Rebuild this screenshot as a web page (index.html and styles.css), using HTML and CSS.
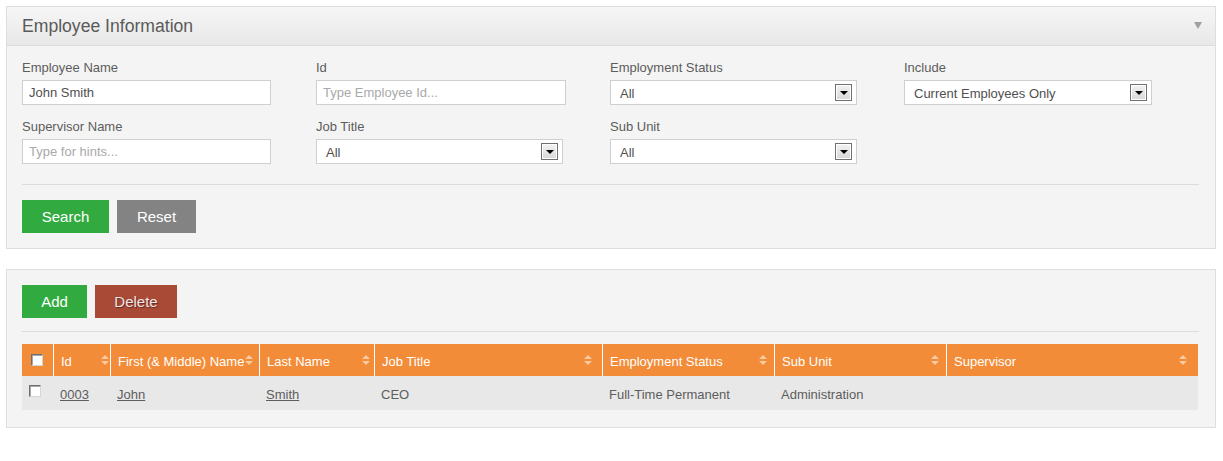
FILE: index.html
```html
<!DOCTYPE html>
<html>
<head>
<meta charset="utf-8">
<link rel="stylesheet" href="styles.css">
</head>
<body>
<div class="panel search-panel">
  <div class="panel-head">
    <h1 class="panel-title">Employee Information</h1>
    <span class="collapse-arrow"></span>
  </div>
  <div class="panel-body">
    <div class="form-grid">
      <div class="field">
        <label class="field-label">Employee Name</label>
        <div class="text-input w249">John Smith</div>
      </div>
      <div class="field">
        <label class="field-label">Id</label>
        <div class="text-input w250 placeholder">Type Employee Id...</div>
      </div>
      <div class="field">
        <label class="field-label">Employment Status</label>
        <div class="select w247"><span class="select-text">All</span><span class="select-btn"></span></div>
      </div>
      <div class="field">
        <label class="field-label">Include</label>
        <div class="select w248"><span class="select-text">Current Employees Only</span><span class="select-btn"></span></div>
      </div>
      <div class="field">
        <label class="field-label">Supervisor Name</label>
        <div class="text-input w249 placeholder">Type for hints...</div>
      </div>
      <div class="field">
        <label class="field-label">Job Title</label>
        <div class="select w247"><span class="select-text">All</span><span class="select-btn"></span></div>
      </div>
      <div class="field">
        <label class="field-label">Sub Unit</label>
        <div class="select w247"><span class="select-text">All</span><span class="select-btn"></span></div>
      </div>
    </div>
    <div class="divider"></div>
    <div class="btn-row">
      <button class="btn btn-green w87">Search</button>
      <button class="btn btn-gray w79">Reset</button>
    </div>
  </div>
</div>

<div class="panel list-panel">
  <div class="btn-row">
    <button class="btn btn-green w65">Add</button>
    <button class="btn btn-red w82">Delete</button>
  </div>
  <div class="divider list-divider"></div>
  <table class="emp-table">
    <colgroup>
      <col style="width:31px">
      <col style="width:57px">
      <col style="width:149px">
      <col style="width:115px">
      <col style="width:228px">
      <col style="width:172px">
      <col style="width:172px">
      <col style="width:252px">
    </colgroup>
    <thead>
      <tr>
        <th class="chk-cell"><span class="chk chk-head"></span></th>
        <th class="sortable">Id</th>
        <th class="sortable">First (&amp; Middle) Name</th>
        <th class="sortable">Last Name</th>
        <th class="sortable">Job Title</th>
        <th class="sortable">Employment Status</th>
        <th class="sortable">Sub Unit</th>
        <th class="sortable">Supervisor</th>
      </tr>
    </thead>
    <tbody>
      <tr>
        <td class="chk-cell"><span class="chk"></span></td>
        <td><a class="cell-link">0003</a></td>
        <td><a class="cell-link">John</a></td>
        <td><a class="cell-link">Smith</a></td>
        <td>CEO</td>
        <td>Full-Time Permanent</td>
        <td>Administration</td>
        <td></td>
      </tr>
    </tbody>
  </table>
</div>
</body>
</html>
```

FILE: styles.css
```css
* { box-sizing: border-box; }

html, body {
  margin: 0;
  padding: 0;
  background: #fff;
}

body {
  padding: 6px 0 0 6px;
  font-family: "Liberation Sans", Arial, sans-serif;
  font-size: 13px;
  color: #5d5d5d;
}

.panel {
  width: 1210px;
  background: #f4f4f4;
  border: 1px solid #dedede;
}

.panel-head {
  position: relative;
  height: 39px;
  padding: 0 15px;
  background: linear-gradient(#f6f6f6, #e8e8e8);
  border-bottom: 1px solid #dcdcdc;
}

.panel-title {
  margin: 0;
  font-size: 17.6px;
  font-weight: normal;
  line-height: 39px;
  color: #5a5a5a;
}

.collapse-arrow {
  position: absolute;
  right: 13px;
  top: 15px;
  width: 0;
  height: 0;
  border-left: 4px solid transparent;
  border-right: 4px solid transparent;
  border-top: 7px solid #a0a0a0;
}

.panel-body {
  padding: 13px 16px 15px 15px;
}

.form-grid {
  display: grid;
  grid-template-columns: repeat(4, 294px);
  row-gap: 13px;
}

.field {
  display: flex;
  flex-direction: column;
  align-items: flex-start;
}

.field-label {
  line-height: 16px;
  padding-top: 1px;
  margin-bottom: 4px;
  color: #5d5d5d;
}

.text-input {
  height: 25px;
  line-height: 23px;
  padding: 0 6px;
  background: #fff;
  border: 1px solid #cfcfcf;
  color: #4f4f4f;
  white-space: nowrap;
  overflow: hidden;
}

.text-input.placeholder { color: #a9a9a9; }

.w247 { width: 247px; }
.w248 { width: 248px; }
.w249 { width: 249px; }
.w250 { width: 250px; }

.select {
  display: flex;
  align-items: center;
  justify-content: space-between;
  height: 25px;
  padding: 0 4px 0 9px;
  background: #fff;
  border: 1px solid #cfcfcf;
  color: #4f4f4f;
}

.select-text { line-height: 23px; padding-top: 1px; }

.select-btn {
  position: relative;
  width: 17px;
  height: 17px;
  border: 1px solid #707070;
  box-shadow: inset 0 0 0 1px #fff;
  background: linear-gradient(#f2f2f2, #d8d8d8);
}

.select-btn::after {
  content: "";
  position: absolute;
  left: 4px;
  top: 6px;
  width: 0;
  height: 0;
  border-left: 4px solid transparent;
  border-right: 4px solid transparent;
  border-top: 4px solid #000;
}

.divider {
  height: 1px;
  background: #dcdcdc;
  margin: 20px 0 15px;
}

.btn-row {
  display: flex;
  gap: 8px;
}

.btn {
  height: 33px;
  padding: 0;
  border: none;
  font-family: "Liberation Sans", Arial, sans-serif;
  font-size: 15px;
  color: #fff;
  text-align: center;
  cursor: pointer;
}

.w87 { width: 87px; }
.w79 { width: 79px; }
.w65 { width: 65px; }
.w82 { width: 82px; }

.btn-green { background: #31ab40; }
.btn-gray { background: #838383; }
.btn-red {
  background: #a94a37;
  color: #ece4e4;
  text-shadow: 1px 1px 1px rgba(60, 20, 20, 0.6);
}

.list-panel {
  margin-top: 20px;
  padding: 15px 16px 17px 15px;
}

.list-divider {
  margin: 13px 0 12px;
}

.emp-table {
  width: 1176px;
  table-layout: fixed;
  border-collapse: separate;
  border-spacing: 0;
}

.emp-table th {
  position: relative;
  height: 32px;
  padding: 4px 0 0 7px;
  background: #f28c38;
  color: #fff;
  font-weight: normal;
  text-align: left;
  white-space: nowrap;
  border-left: 1px solid #fff;
  line-height: 28px;
}

.emp-table th:first-child { border-left: none; }

.emp-table th.sortable::before,
.emp-table th.sortable::after {
  content: "";
  position: absolute;
  left: calc((100% - 7px) * 0.95);
  width: 0;
  height: 0;
  border-left: 4px solid transparent;
  border-right: 4px solid transparent;
}

.emp-table th.sortable::before {
  top: 11px;
  border-bottom: 4px solid #f9c9a0;
}

.emp-table th.sortable::after {
  top: 17px;
  border-top: 4px solid #f9c9a0;
}

.emp-table td {
  height: 34px;
  padding: 2px 0 0 6px;
  background: #e8e8e8;
  border-left: 1px solid #e8e8e8;
  white-space: nowrap;
  color: #5d5d5d;
}

.emp-table td:first-child { border-left: none; }

.emp-table .chk-cell {
  padding: 0;
  text-align: left;
}

.chk {
  display: inline-block;
  width: 12px;
  height: 12px;
  background: #fff;
  border: 1px solid;
  border-color: #6f6f6f #d5d5d5 #d5d5d5 #6f6f6f;
  box-shadow: inset 1px 1px 0 #a8a8a8;
  vertical-align: middle;
}

th .chk-head { margin-left: 9px; margin-top: -2px; }
td .chk { margin-left: 7px; margin-top: -6px; }

.cell-link {
  color: #5d5d5d;
  text-decoration: underline;
}
```
